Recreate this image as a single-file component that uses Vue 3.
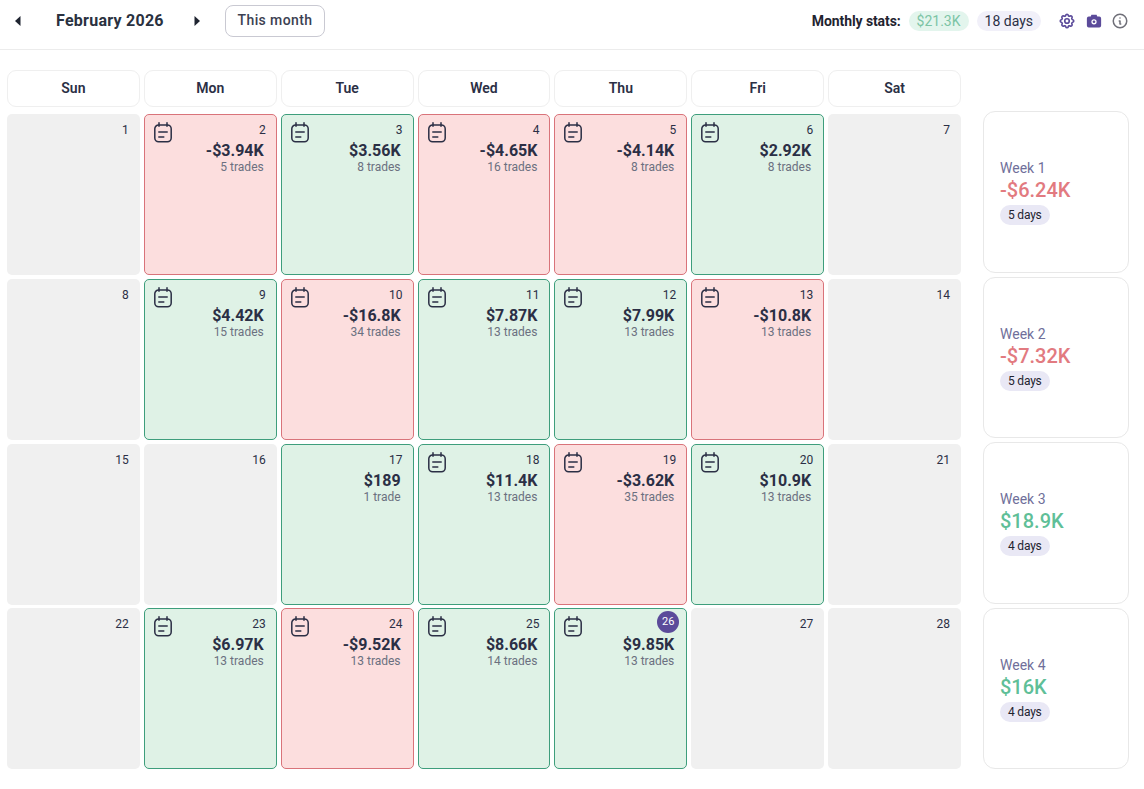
<script setup>
const days = ['Sun', 'Mon', 'Tue', 'Wed', 'Thu', 'Fri', 'Sat']
const d = (n, pnl, trades, tone, today = false) => ({ n, pnl, trades, tone, today })
const e = (n) => ({ n, tone: 'empty' })
const weeks = [
  [e(1), d(2, '-$3.94K', '5 trades', 'loss'), d(3, '$3.56K', '8 trades', 'win'), d(4, '-$4.65K', '16 trades', 'loss'), d(5, '-$4.14K', '8 trades', 'loss'), d(6, '$2.92K', '8 trades', 'win'), e(7)],
  [e(8), d(9, '$4.42K', '15 trades', 'win'), d(10, '-$16.8K', '34 trades', 'loss'), d(11, '$7.87K', '13 trades', 'win'), d(12, '$7.99K', '13 trades', 'win'), d(13, '-$10.8K', '13 trades', 'loss'), e(14)],
  [e(15), e(16), { ...d(17, '$189', '1 trade', 'win'), noIcon: true }, d(18, '$11.4K', '13 trades', 'win'), d(19, '-$3.62K', '35 trades', 'loss'), d(20, '$10.9K', '13 trades', 'win'), e(21)],
  [e(22), d(23, '$6.97K', '13 trades', 'win'), d(24, '-$9.52K', '13 trades', 'loss'), d(25, '$8.66K', '14 trades', 'win'), d(26, '$9.85K', '13 trades', 'win', true), e(27), e(28)],
]
const summary = [
  { label: 'Week 1', pnl: '-$6.24K', days: '5 days', tone: 'neg' },
  { label: 'Week 2', pnl: '-$7.32K', days: '5 days', tone: 'neg' },
  { label: 'Week 3', pnl: '$18.9K', days: '4 days', tone: 'pos' },
  { label: 'Week 4', pnl: '$16K', days: '4 days', tone: 'pos' },
]
</script>

<template>
  <div class="page">
    <header class="topbar">
      <div class="nav">
        <button class="arrow"><svg width="8" height="10" viewBox="0 0 8 10"><path d="M6.500 0v10L1 5z" fill="#1f2430" /></svg></button>
        <h1 class="month">February 2026</h1>
        <button class="arrow"><svg width="8" height="10" viewBox="0 0 8 10"><path d="M1.500 0v10L7 5z" fill="#1f2430" /></svg></button>
        <button class="this-month">This month</button>
      </div>
      <div class="stats">
        <span class="stats-label">Monthly stats:</span>
        <span class="pill pill-green">$21.3K</span>
        <span class="pill pill-lilac">18 days</span>
        <div class="tools">
          <svg width="18" height="18" viewBox="0 0 24 24" fill="none" stroke="#5b4b9a" stroke-width="2.200" stroke-linecap="round" stroke-linejoin="round">
            <path d="M10.325 4.317c.426 -1.756 2.924 -1.756 3.35 0a1.724 1.724 0 0 0 2.573 1.066c1.543 -.94 3.31 .826 2.37 2.37a1.724 1.724 0 0 0 1.065 2.572c1.756 .426 1.756 2.924 0 3.35a1.724 1.724 0 0 0 -1.066 2.573c.94 1.543 -.826 3.31 -2.37 2.37a1.724 1.724 0 0 0 -2.572 1.065c-.426 1.756 -2.924 1.756 -3.35 0a1.724 1.724 0 0 0 -2.573 -1.066c-1.543 .94 -3.31 -.826 -2.37 -2.37a1.724 1.724 0 0 0 -1.065 -2.572c-1.756 -.426 -1.756 -2.924 0 -3.35a1.724 1.724 0 0 0 1.066 -2.573c-.94 -1.543 .826 -3.31 2.37 -2.37c1 .608 2.296 .07 2.572 -1.065z" />
            <circle cx="12" cy="12" r="3" />
          </svg>
          <svg width="18" height="18" viewBox="0 0 24 24">
            <path fill="#5b4b9a" fill-rule="evenodd" d="M5 6h2.600l1-2.200h6.800l1 2.200H19a2.500 2.500 0 0 1 2.500 2.500v9.500A2.500 2.500 0 0 1 19 20.500H5A2.500 2.500 0 0 1 2.500 18V8.500A2.500 2.500 0 0 1 5 6zm7 3.500a3.500 3.500 0 1 0 0 7 3.500 3.500 0 0 0 0-7z" />
            <circle cx="12" cy="13" r="1.800" fill="#5b4b9a" />
          </svg>
          <svg class="info" width="18" height="18" viewBox="0 0 24 24" fill="none" stroke="#6f6f78" stroke-width="2" stroke-linecap="round" stroke-linejoin="round">
            <circle cx="12" cy="12" r="9" />
            <path d="M12 8h.01M11 12h1v4h1" />
          </svg>
        </div>
      </div>
    </header>

    <main class="body">
      <section class="calendar">
        <div class="head-row">
          <div v-for="day in days" :key="day" class="head-cell">{{ day }}</div>
        </div>
        <div class="grid">
          <template v-for="(week, i) in weeks" :key="i">
            <article v-for="c in week" :key="c.n" class="cell" :class="c.tone">
              <svg v-if="c.tone !== 'empty' && !c.noIcon" class="note" width="22" height="22" viewBox="0 0 22 22" fill="none" stroke="#2b2f45" stroke-width="1.500" stroke-linecap="round" stroke-linejoin="round">
                <rect x="2.800" y="4" width="16.400" height="16.800" rx="3.800" />
                <path d="M7 1.800v3.500M15 1.800v3.500M6.800 11h8.400M6.800 16h5" />
              </svg>
              <span class="num" :class="{ today: c.today }">{{ c.n }}</span>
              <template v-if="c.tone !== 'empty'">
                <strong class="pnl">{{ c.pnl }}</strong>
                <span class="trades">{{ c.trades }}</span>
              </template>
            </article>
          </template>
        </div>
      </section>
      <aside class="weeks">
        <div v-for="w in summary" :key="w.label" class="week-card">
          <span class="week-label">{{ w.label }}</span>
          <span class="week-pnl" :class="w.tone">{{ w.pnl }}</span>
          <span class="week-days">{{ w.days }}</span>
        </div>
      </aside>
    </main>
  </div>
</template>

<style>
html, body { margin: 0; background: #fff; }
</style>

<style scoped>
.page {
  width: 1144px;
  height: 789px;
  font-family: Roboto, "Liberation Sans", sans-serif;
  color: #2b2f45;
  overflow: hidden;
}
.topbar {
  box-sizing: border-box;
  height: 50px;
  border-bottom: 1px solid #ececec;
  display: flex;
  align-items: center;
  justify-content: space-between;
  padding: 0 15px 8px 0;
}
.nav { display: flex; align-items: center; padding-left: 14px; }
.arrow {
  border: 0;
  background: none;
  padding: 0;
  width: 8px;
  height: 10px;
  display: flex;
}
.month {
  margin: 0 0 0 34px;
  width: 137px;
  font-size: 16px;
  line-height: 24px;
  font-weight: 700;
  color: #2a3140;
  letter-spacing: .26px;
}
.this-month {
  box-sizing: border-box;
  margin-left: 24px;
  width: 100px;
  height: 32px;
  border: 1px solid #c9c9d2;
  border-radius: 8px;
  background: #fff;
  font: 500 14px Roboto, sans-serif;
  color: #3c4152;
  letter-spacing: .4px;
  padding: 0 0 1px;
}
.stats { display: flex; align-items: center; font-size: 14px; }
.stats-label { font-weight: 700; color: #1f2430; font-size: 14px; letter-spacing: -.1px; }
.pill {
  height: 20px;
  line-height: 20px;
  border-radius: 10px;
  padding: 0 8px;
  font-size: 14px;
}
.pill-green { margin-left: 8px; background: #e3f5ed; color: #7cc4a5; }
.pill-lilac { margin-left: 8px; background: #f1f0f9; color: #2b2f45; }
.tools { display: flex; align-items: center; gap: 9px; margin-left: 17px; }
.info { margin-left: -1px; }
.body { display: flex; align-items: flex-start; padding: 20px 0 0 7px; }
.calendar { width: 954px; }
.head-row {
  display: grid;
  grid-template-columns: repeat(7, 1fr);
  gap: 4px;
}
.head-cell {
  box-sizing: border-box;
  height: 37px;
  border: 1px solid #efefef;
  border-radius: 9px;
  display: flex;
  align-items: center;
  justify-content: center;
  padding-bottom: 2px;
  font-size: 14px;
  font-weight: 600;
  color: #2b2f45;
}
.grid {
  margin-top: 7px;
  display: grid;
  grid-template-columns: repeat(7, 1fr);
  grid-auto-rows: 161px;
  row-gap: 3.800px;
  column-gap: 4px;
}
.cell {
  position: relative;
  box-sizing: border-box;
  border-radius: 5px;
  border: 1px solid transparent;
  padding: 8px 12px 0 0;
  display: flex;
  flex-direction: column;
  align-items: flex-end;
}
.empty { background: #f0f0f0; }
.win { background: #dff2e6; border-color: #3e9e7c; }
.loss { background: #fcdede; border-color: #d9737a; }
.note { position: absolute; left: 7px; top: 6px; }
.num {
  margin-right: -2px;
  font-size: 12px;
  line-height: 14px;
  color: #2b2f45;
}
.num.today {
  box-sizing: border-box;
  width: 22px;
  height: 22px;
  margin: -6px -5px -2px 0;
  border-radius: 50%;
  background: #5b4b9a;
  color: #fff;
  font-size: 11px;
  line-height: 22px;
  text-align: center;
}
.pnl {
  margin-top: 4px;
  font-size: 16px;
  line-height: 20px;
  font-weight: 700;
  color: #2b2f45;
}
.trades {
  font-size: 12px;
  line-height: 12px;
  color: #6b7080;
}
.weeks {
  margin-left: 22px;
  width: 146px;
  padding-top: 41px;
  display: flex;
  flex-direction: column;
  gap: 4px;
}
.week-card {
  box-sizing: border-box;
  height: 161.500px;
  border: 1px solid #e8e8e8;
  border-radius: 12px;
  padding: 2px 0 0 16px;
  display: flex;
  flex-direction: column;
  align-items: flex-start;
  justify-content: center;
}
.week-label { font-size: 14px; line-height: 18px; margin-top: -1px; color: #6f6f9a; }
.week-pnl { font-size: 20px; line-height: 26px; font-weight: 500; }
.week-pnl.neg { color: #e27a80; }
.week-pnl.pos { color: #5fbf98; }
.week-days {
  margin-top: 2px;
  height: 20px;
  line-height: 20px;
  padding: 0 8px;
  border-radius: 10px;
  background: #e9e8f5;
  color: #1f2430;
  font-size: 12px;
  letter-spacing: -.2px;
}
</style>
